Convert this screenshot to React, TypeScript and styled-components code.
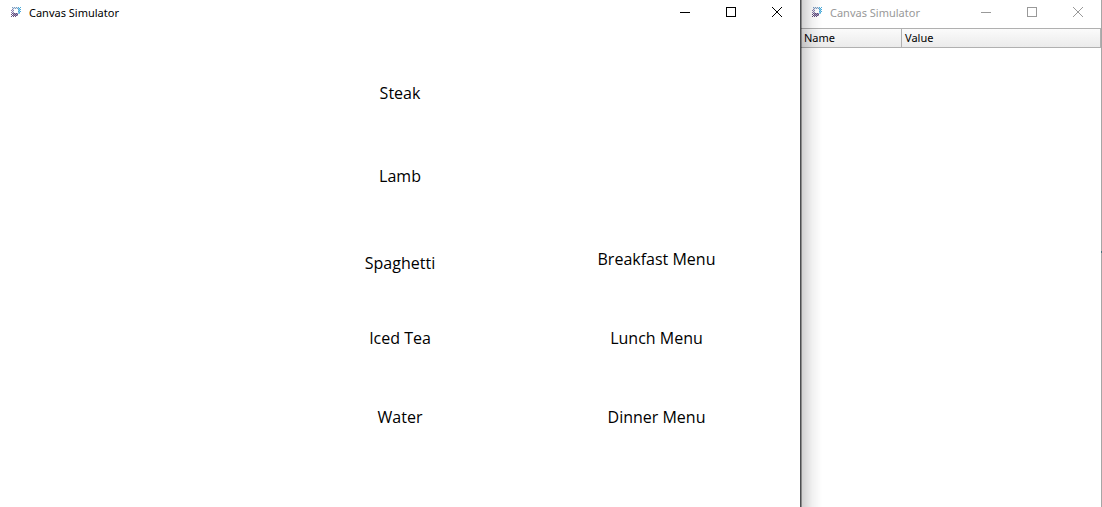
import React from "react";
import styled, { createGlobalStyle } from "styled-components";

const GlobalStyle = createGlobalStyle`
  * { box-sizing: border-box; }
  body {
    margin: 0;
    background: #fff;
    color: #000;
    font-family: "Open Sans", "Noto Sans", sans-serif;
  }
`;

const Desktop = styled.div`
  display: flex;
  min-height: 100vh;
  overflow: hidden;
`;

const MainWindow = styled.main`
  flex: 1;
  min-width: 0;
  background: #fff;
  border-right: 1px solid #4c4e50;
`;

/* The ::before layer is the shadow that the main window casts; ::after is a speck of the desktop behind. */
const DataWindow = styled.aside`
  position: relative;
  flex: 0 0 301px;
  background: #fff;
  border-right: 1px solid #a6a6a6;

  &::before {
    content: "";
    position: absolute;
    top: 0;
    bottom: 0;
    left: 0;
    width: 20px;
    border-left: 1px solid rgba(0, 0, 0, 0.45);
    background: linear-gradient(90deg, rgba(0, 0, 0, 0.18), rgba(0, 0, 0, 0.06) 50%, rgba(0, 0, 0, 0));
    pointer-events: none;
  }

  &::after {
    content: "";
    position: absolute;
    top: 251px;
    right: -1px;
    width: 1px;
    height: 2px;
    background: #47717c;
  }
`;

const TitleBar = styled.header<{ $inactive?: boolean; $height: number }>`
  display: flex;
  align-items: flex-start;
  height: ${(p) => p.$height}px;
  padding-left: 10px;
  color: ${(p) => (p.$inactive ? "#999" : "#000")};
`;

const Title = styled.h1`
  flex: 1;
  display: flex;
  align-items: flex-start;
  gap: 7px;
  margin: 0;
  font-family: "Noto Sans", sans-serif;
  font-size: 11px;
  line-height: 26px;
  font-weight: 400;
  white-space: nowrap;

  svg {
    margin-top: 6px;
  }
`;

const Caption = styled.button`
  display: flex;
  align-items: center;
  justify-content: center;
  width: 46px;
  height: 24px;
  padding: 0;
  border: 0;
  background: none;
  color: inherit;
`;

const Canvas = styled.section`
  display: grid;
  grid-template-columns: 273fr 254fr 259fr 14fr;
  padding-top: 57px;
`;

const Column = styled.ul<{ $column: number; $rows: string }>`
  grid-column: ${(p) => p.$column};
  display: grid;
  grid-template-rows: ${(p) => p.$rows};
  align-content: end;
  justify-items: center;
  margin: 0;
  padding: 0;
  list-style: none;
`;

const Item = styled.li`
  font-size: 16px;
  line-height: 24px;
  white-space: nowrap;
`;

const Table = styled.table`
  width: 100%;
  table-layout: fixed;
  border-collapse: separate;
  border-spacing: 0;
`;

const HeadCell = styled.th<{ $width?: string }>`
  width: ${(p) => p.$width || "auto"};
  height: 20px;
  padding: 0 3px;
  border: 1px solid #b0b0b0;
  border-left: 0;
  background: linear-gradient(#fbfbfb, #ebebeb);
  font-family: "Noto Sans", sans-serif;
  font-size: 11px;
  line-height: 18px;
  font-weight: 400;
  text-align: left;
`;

const AppIcon = () => (
  <svg width="12" height="12" viewBox="0 0 12 12" shapeRendering="crispEdges" aria-hidden="true">
    <path d="M2 1h7v2H2zM2 3h2v4H2z" fill="#dfe8f2" />
    <path d="M8 2h2v6H8z" fill="#8ccfec" />
    <path d="M3 7h5v3H3z" fill="#a79bbd" />
    <path d="M2 1h1v1H2zM4 1h1v1H4zM6 1h1v1H6zM3 2h1v1H3zM5 2h1v1H5zM7 2h1v1H7z" fill="#7f9cc0" />
    <path d="M8 1h1v1H8zM10 1h1v1h-1zM9 2h1v1H9zM8 3h1v1H8zM10 3h1v1h-1zM9 4h1v1H9zM8 5h1v1H8zM10 5h1v1h-1zM9 6h1v1H9z" fill="#4ba9d8" />
    <path d="M2 3h1v1H2zM3 4h1v1H3zM2 5h1v1H2zM1 4h1v1H1zM3 6h1v1H3zM1 6h1v1H1z" fill="#8c7caa" />
    <path d="M2 7h1v1H2zM4 7h1v1H4zM6 7h1v1H6zM1 8h1v1H1zM3 8h1v1H3zM5 8h1v1H5zM7 8h1v1H7zM2 9h1v1H2zM4 9h1v1H4zM6 9h1v1H6zM1 10h1v1H1zM3 10h1v1H3zM5 10h1v1H5z" fill="#604c7c" />
  </svg>
);

const WindowTitle = ({ inactive, height }: { inactive?: boolean; height: number }) => (
  <TitleBar $inactive={inactive} $height={height}>
    <Title>
      <AppIcon />
      Canvas Simulator
    </Title>
    <Caption aria-label="Minimize">
      <svg width="10" height="10" viewBox="0 0 10 10" shapeRendering="crispEdges">
        <path d="M0 5h10v1H0z" fill="currentColor" />
      </svg>
    </Caption>
    <Caption aria-label="Maximize">
      <svg width="10" height="10" viewBox="0 0 10 10" shapeRendering="crispEdges">
        <path d="M.5.5h9v9h-9z" fill="none" stroke="currentColor" />
      </svg>
    </Caption>
    <Caption aria-label="Close">
      <svg width="10" height="10" viewBox="0 0 10 10">
        <path d="M0 0l10 10M10 0L0 10" fill="none" stroke="currentColor" />
      </svg>
    </Caption>
  </TitleBar>
);

const dishes = ["Steak", "Lamb", "Spaghetti", "Iced Tea", "Water"];
const menus = ["Breakfast Menu", "Lunch Menu", "Dinner Menu"];

export default function App() {
  return (
    <>
      <GlobalStyle />
      <Desktop>
        <MainWindow>
          <WindowTitle height={24} />
          <Canvas>
            <Column $column={2} $rows="83px 87px 75px 79px 24px">
              {dishes.map((name) => (
                <Item key={name}>{name}</Item>
              ))}
            </Column>
            <Column $column={3} $rows="79px 79px 24px">
              {menus.map((name) => (
                <Item key={name}>{name}</Item>
              ))}
            </Column>
          </Canvas>
        </MainWindow>
        <DataWindow>
          <WindowTitle inactive height={28} />
          <Table>
            <thead>
              <tr>
                <HeadCell $width="101px">Name</HeadCell>
                <HeadCell>Value</HeadCell>
              </tr>
            </thead>
          </Table>
        </DataWindow>
      </Desktop>
    </>
  );
}
